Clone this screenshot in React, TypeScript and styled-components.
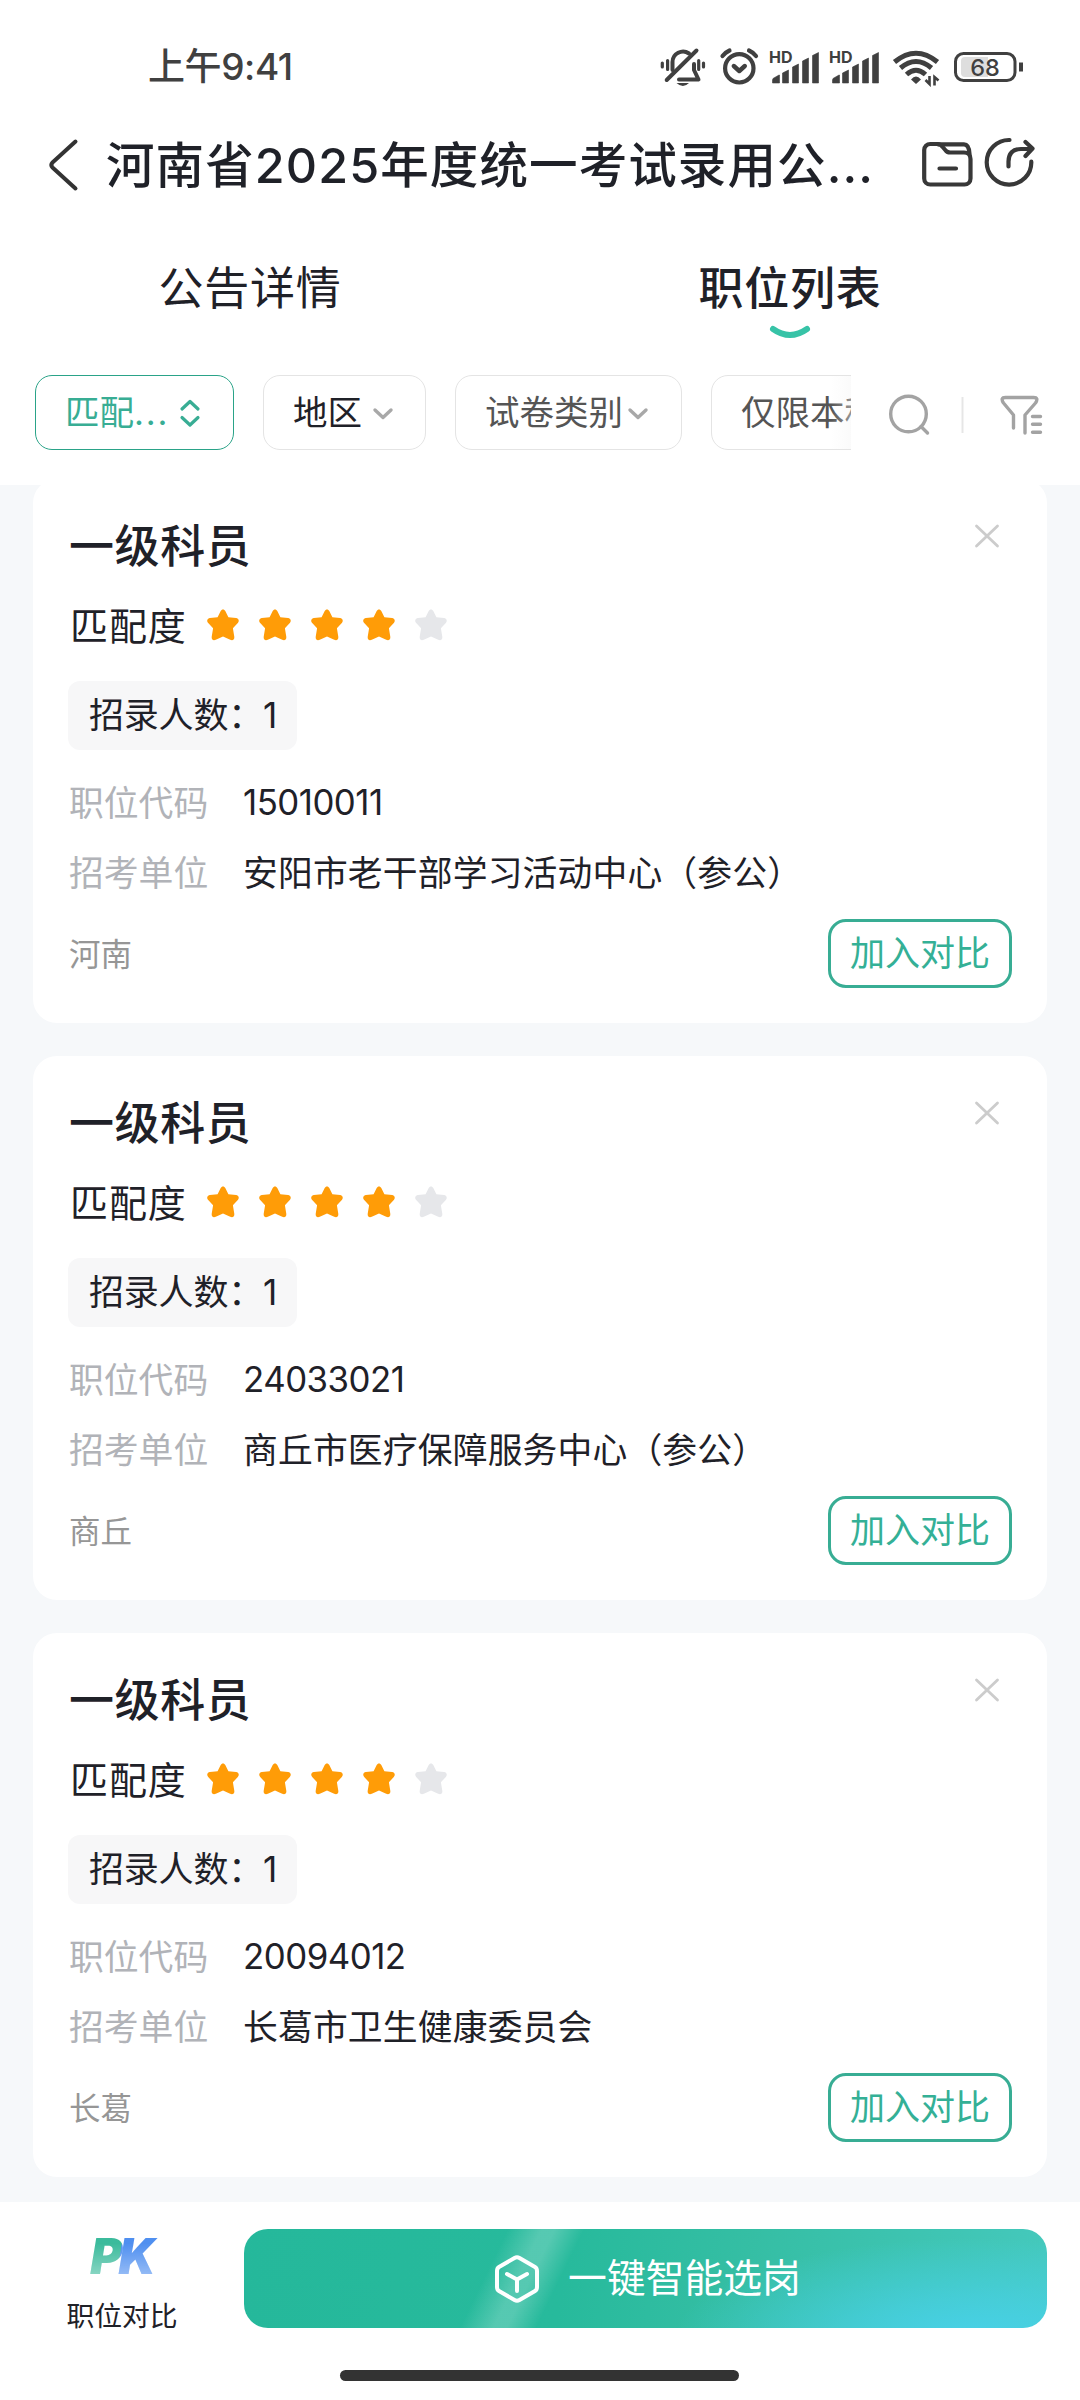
import React from "react";
import styled, { createGlobalStyle } from "styled-components";

const Global = createGlobalStyle`
  *, *::before, *::after { box-sizing: border-box; }
  body { margin: 0; background: #fff; }
  button { font: inherit; }
`;

const Screen = styled.div`
  width: 1080px;
  height: 2400px;
  display: flex;
  flex-direction: column;
  overflow: hidden;
  background: #fff;
  color: #1f2128;
  font-family: Inter, "Noto Sans CJK SC", sans-serif;
  white-space: nowrap;
`;

const StatusBar = styled.div`
  height: 116px;
  padding: 18px 57px 0 148px;
  display: flex;
  align-items: center;
  justify-content: space-between;
  flex: none;
`;

const Clock = styled.div`
  font-size: 37px;
  font-weight: 500;
  color: #404040;
  line-height: 50px;
  letter-spacing: -0.4px;
`;

const StatusIcons = styled.svg`
  width: 364px;
  height: 40px;
  flex: none;
`;

const NavBar = styled.header`
  height: 104px;
  flex: none;
  display: flex;
  align-items: center;
  padding: 0 44px 6px 47px;
`;

const BackIcon = styled.svg`
  width: 32px;
  height: 56px;
  margin-right: 27px;
`;

const Title = styled.h1`
  margin: 0;
  padding-top: 2px;
  flex: 1;
  font-size: 48.5px;
  font-weight: 500;
  line-height: 70px;
  letter-spacing: 1.1px;
`;

const NavIcons = styled.svg`
  width: 118px;
  height: 56px;
`;

const Tabs = styled.nav`
  height: 155px;
  flex: none;
  display: grid;
  grid-template-columns: 1fr 1fr;
`;

const Tab = styled.div<{ $active?: boolean }>`
  display: flex;
  flex-direction: column;
  align-items: center;
  padding: 35px 40px 0 0;
  font-size: 45px;
  line-height: 68px;
  letter-spacing: 0.8px;
  font-weight: ${(p) => (p.$active ? 500 : 400)};
`;

const Smile = styled.svg`
  width: 42px;
  height: 16px;
  margin-top: 2px;
`;

const FilterBar = styled.div`
  height: 110px;
  flex: none;
  display: flex;
  align-items: flex-start;
  padding-left: 35px;
`;

const ChipStrip = styled.div`
  position: relative;
  width: 816px;
  display: flex;
  gap: 29px;
  overflow: hidden;
`;

const StripFade = styled.div`
  position: absolute;
  right: 0;
  top: 1px;
  width: 20px;
  height: 73px;
  background: linear-gradient(to right, rgba(244, 244, 244, 0), rgba(244, 244, 244, 0.4));
`;

const Chip = styled.div<{ $w: number; $tone: string; $active?: boolean; $gap?: number }>`
  width: ${(p) => p.$w}px;
  height: 75px;
  flex: none;
  display: flex;
  align-items: center;
  gap: ${(p) => p.$gap ?? 10}px;
  padding-left: 29px;
  border: ${(p) => (p.$active ? "1px solid #2aa388" : "1px solid #e4e4e4")};
  border-radius: 17px;
  color: ${(p) => p.$tone};
  font-size: 34.5px;
  line-height: 50px;
`;

const Dots = styled.span`
  letter-spacing: 1.8px;
`;

const ChipIcon = styled.svg`
  width: 22px;
  height: 30px;
  flex: none;
`;

const ToolIcons = styled.svg`
  width: 229px;
  height: 75px;
`;

const List = styled.main`
  flex: 1;
  min-height: 0;
  overflow: hidden;
  padding: 0 33px;
  background: #f6f8fa;
`;

const Feed = styled.div`
  margin-top: -6px;
  display: flex;
  flex-direction: column;
  gap: 33px;
`;

const Card = styled.article`
  height: 544px;
  flex: none;
  display: flex;
  flex-direction: column;
  padding: 34px 35px 0 36px;
  border-radius: 24px;
  background: #fff;
`;

const CardHead = styled.div`
  display: flex;
  justify-content: space-between;
  height: 77px;
`;

const CardTitle = styled.h2`
  margin: 0;
  font-size: 45px;
  line-height: 67px;
  font-weight: 500;
  letter-spacing: 0.6px;
`;

const CloseIcon = styled.svg`
  width: 28px;
  height: 28px;
  margin: 9px 11px 0 0;
`;

const MatchRow = styled.div`
  height: 66px;
  display: flex;
  align-items: center;
  padding-left: 1px;
  font-size: 38px;
  letter-spacing: 0.9px;
`;

const Stars = styled.div`
  display: flex;
  gap: 18px;
  margin: 3px 0 0 19px;
`;

const StarIcon = styled.svg`
  width: 34px;
  height: 34px;
`;

const Tag = styled.div`
  align-self: flex-start;
  margin: 25px 0 16px -1px;
  width: 229px;
  height: 69px;
  padding: 0 0 6px 21px;
  display: flex;
  align-items: center;
  border-radius: 12px;
  background: #f7f7f8;
  font-size: 35px;
  letter-spacing: -0.2px;
`;

const Field = styled.div`
  height: 70px;
  display: flex;
  align-items: center;
  font-size: 34.8px;
`;

const FieldLabel = styled.span`
  width: 174px;
  color: #b1b3b8;
`;

const FieldValue = styled.span<{ $numeric?: boolean }>`
  padding-top: ${(p) => (p.$numeric ? 2 : 0)}px;
  letter-spacing: ${(p) => (p.$numeric ? -0.5 : 0.15)}px;
`;

const CardFoot = styled.div`
  height: 69px;
  margin-top: 13px;
  display: flex;
  align-items: center;
  justify-content: space-between;
`;

const Region = styled.span`
  padding-bottom: 4px;
  font-size: 31.5px;
  color: #969696;
`;

const CompareButton = styled.button`
  width: 184px;
  height: 69px;
  padding: 0 0 1px;
  border: 3px solid #38ad94;
  border-radius: 18px;
  background: #fff;
  color: #34b096;
  font-size: 35px;
  line-height: 50px;
`;

const BottomBar = styled.footer`
  height: 198px;
  flex: none;
  display: flex;
  flex-direction: column;
  align-items: center;
  padding-top: 27px;
`;

const Actions = styled.div`
  width: 100%;
  height: 106px;
  display: flex;
`;

const PkEntry = styled.div`
  width: 244px;
  display: flex;
  flex-direction: column;
  align-items: center;
`;

const PkMark = styled.div`
  padding: 0 6px 0 4px;
  font-size: 49px;
  line-height: 56px;
  font-weight: 900;
  font-style: italic;
  letter-spacing: -4px;
  background:
    linear-gradient(rgba(255, 255, 255, 0) 25%, rgba(255, 255, 255, 0.42) 85%),
    linear-gradient(99deg, #3bbb9c 46.5%, #4f8ff0 47.5%);
  background-clip: text;
  -webkit-background-clip: text;
  color: transparent;
`;

const PkLabel = styled.div`
  margin-top: 11px;
  font-size: 27.8px;
  line-height: 40px;
`;

const SmartPick = styled.button`
  width: 803px;
  height: 99px;
  padding: 0 0 0 4px;
  display: flex;
  align-items: center;
  justify-content: center;
  gap: 28px;
  border: 0;
  border-radius: 24px;
  color: #fff;
  font-size: 38.8px;
  background:
    linear-gradient(116deg, rgba(255, 255, 255, 0) 31%, rgba(255, 255, 255, 0.22) 35%, rgba(255, 255, 255, 0.22) 36.5%, rgba(255, 255, 255, 0) 40%),
    radial-gradient(ellipse 300px 100px at 91% 110%, #48d1e8 0%, rgba(72, 209, 232, 0.65) 40%, rgba(72, 209, 232, 0) 100%),
    linear-gradient(100deg, #25b89b 0%, #27ba9c 40%, #35bea4 62%, #45c9bd 100%);
`;

const SmartText = styled.span`
  padding-bottom: 7px;
`;

const CubeIcon = styled.svg`
  width: 46px;
  height: 50px;
`;

const HomeIndicator = styled.div`
  width: 399px;
  height: 11px;
  margin: 35px 1px 0 0;
  border-radius: 6px;
  background: #333;
`;

const STAR =
  "M17 1.5c1 0 1.8.6 2.3 1.6l3.1 6.2 7.7.8c2.7.4 3.5 3 1.7 4.9l-4.9 5.3 1.4 8.4c.4 2.8-1.6 4.2-4.100 3L17 28.600l-7.200 3.100c-2.500 1.200-4.500-.2-4.100-3l1.400-8.400L2.200 15C.4 13.100 1.200 10.500 3.900 10.100l7.700-.8 3.100-6.200c.5-1 1.300-1.600 2.300-1.600z";

const Star = ({ on }: { on: boolean }) => (
  <StarIcon viewBox="0 0 34 34">
    <path d={STAR} fill={on ? "#ff9c07" : "#e6e7ea"} />
  </StarIcon>
);

const Chevron = () => (
  <ChipIcon viewBox="0 0 22 30" fill="none" stroke="#a8a8a8" strokeWidth="3.4" strokeLinecap="round" strokeLinejoin="round">
    <path d="M3 12l8 7.500 8-7.500" />
  </ChipIcon>
);

const SignalBars = ({ x }: { x: number }) => (
  <g transform={`translate(${x} 0)`}>
    <text x="-1" y="16" fontFamily="Inter" fontSize="16" fontWeight="700" fill="#404040">HD</text>
    <path
      d="M3 31.500l6-3.500h.500v8H2.500v-3zM12.500 26l6-3v13h-6zM22.500 20l6-3v19h-6zM32.500 14l6-3v25h-6zM42.500 8.500l6-3V36h-6z"
      fill="#404040"
      stroke="#404040"
      strokeWidth="0.6"
      strokeLinejoin="round"
    />
  </g>
);

const jobs = [
  { title: "一级科员", stars: 4, count: 1, code: "15010011", unit: "安阳市老干部学习活动中心（参公）", region: "河南" },
  { title: "一级科员", stars: 4, count: 1, code: "24033021", unit: "商丘市医疗保障服务中心（参公）", region: "商丘" },
  { title: "一级科员", stars: 4, count: 1, code: "20094012", unit: "长葛市卫生健康委员会", region: "长葛" },
];

const JobCard = ({ job }: { job: (typeof jobs)[number] }) => (
  <Card>
    <CardHead>
      <CardTitle>{job.title}</CardTitle>
      <CloseIcon viewBox="0 0 28 28" stroke="#cccccc" strokeWidth="2.8" strokeLinecap="round">
        <path d="M3.500 4l21 20M24.500 4l-21 20" />
      </CloseIcon>
    </CardHead>
    <MatchRow>
      匹配度
      <Stars>
        {[0, 1, 2, 3, 4].map((i) => (
          <Star key={i} on={i < job.stars} />
        ))}
      </Stars>
    </MatchRow>
    <Tag>招录人数：{job.count}</Tag>
    <Field>
      <FieldLabel>职位代码</FieldLabel>
      <FieldValue $numeric>{job.code}</FieldValue>
    </Field>
    <Field>
      <FieldLabel>招考单位</FieldLabel>
      <FieldValue>{job.unit}</FieldValue>
    </Field>
    <CardFoot>
      <Region>{job.region}</Region>
      <CompareButton>加入对比</CompareButton>
    </CardFoot>
  </Card>
);

export default function App() {
  return (
    <Screen>
      <Global />
      <StatusBar>
        <Clock>上午9:41</Clock>
        <StatusIcons viewBox="0 0 364 40" fill="none" stroke="#404040">
          <g strokeWidth="4" strokeLinecap="round" strokeLinejoin="round">
            <path d="M13.500 23V15a10.500 10.500 0 0 1 16.500-8.500M35 17v6l4.500 9.500H20" />
            <path d="M7.700 33L37.500 3.500" />
            <path d="M3.300 16v4M8.600 13.500v9M39.700 13.500v9M44.500 16v4" strokeWidth="3.2" />
            <path d="M17.500 36h12.500q-6 6-12.500 0z" fill="#404040" strokeWidth="0" />
          </g>
          <circle cx="80.3" cy="21.3" r="14.2" strokeWidth="4.2" />
          <path d="M74.800 19l5.500 5 5.500-5" strokeWidth="4.4" strokeLinecap="round" strokeLinejoin="round" />
          <path d="M63.500 9q3-3.800 7-5.500M97 9q-3-3.800-7-5.500" strokeWidth="4.2" strokeLinecap="round" />
          <g stroke="none">
            <SignalBars x={111} />
            <SignalBars x={171} />
          </g>
          <g strokeWidth="5">
            <path d="M235.500 15Q257-2.500 278.500 15" />
            <path d="M241.500 21Q257 8 272.500 21" />
            <path d="M247.500 27.500Q257 19 266.500 27.500" />
            <path d="M252 32.500q5-6 10 0l-5 4.500z" fill="#404040" strokeWidth="0" />
            <path d="M266.500 33l4 4V29M279.500 33.500l-4-3.500v8.500" strokeWidth="2.6" />
          </g>
          <rect x="296.5" y="6.5" width="59.5" height="27" rx="8" strokeWidth="3" />
          <path d="M306 10h23v20h-23q-4 0-4-4V14q0-4 4-4z" fill="#dedede" stroke="none" />
          <path d="M362 15.500v9" strokeWidth="4" strokeLinecap="butt" />
          <text x="326" y="28.5" textAnchor="middle" fontFamily="Inter" fontSize="23.5" fontWeight="500" fill="#404040" stroke="none">68</text>
        </StatusIcons>
      </StatusBar>

      <NavBar>
        <BackIcon viewBox="0 0 32 56" fill="none" stroke="#333" strokeWidth="4" strokeLinecap="round" strokeLinejoin="round">
          <path d="M28.500 4.500L5.500 25.500q-2.500 2.500 0 5l23 21" />
        </BackIcon>
        <Title>河南省2025年度统一考试录用公...</Title>
        <NavIcons viewBox="0 0 118 56" fill="none" stroke="#383838" strokeWidth="4.2" strokeLinecap="round" strokeLinejoin="round">
          <path d="M6.200 13a6 6 0 0 1 6-6h7.500q3 0 5 3l3 3.500q1.500 2 4.500 2H46q6.500 0 6.500 6.500v19.500a6 6 0 0 1-6 6h-34.300a6 6 0 0 1-6-6z" />
          <path d="M20 7.300h26q5 0 5.500 9.500M21.500 31.500h16.500" />
          <path d="M91.500 3a22.300 22.300 0 1 0 21.800 21.700" />
          <path d="M90.500 29.500v-5q0-12.500 12.500-12.500h10M107.500 5l7 6.500-7 7.500" />
        </NavIcons>
      </NavBar>

      <Tabs>
        <Tab>公告详情</Tab>
        <Tab $active>
          职位列表
          <Smile viewBox="0 0 42 16" fill="none" stroke="#37c3a7" strokeWidth="6" strokeLinecap="round">
            <path d="M4 4q17 12 34 0" />
          </Smile>
        </Tab>
      </Tabs>

      <FilterBar>
        <ChipStrip>
          <Chip $w={199} $tone="#38ad94" $active>
            <span>匹配<Dots>...</Dots></span>
            <ChipIcon viewBox="0 0 22 30" fill="none" stroke="#38ad94" strokeWidth="3.2" strokeLinecap="round" strokeLinejoin="round">
              <path d="M3 11l8-7.500 8 7.500M3 19.500l8 7.500 8-7.500" />
            </ChipIcon>
          </Chip>
          <Chip $w={163} $tone="#1f2128">地区<Chevron /></Chip>
          <Chip $w={227} $tone="#555555" $gap={4}>试卷类别<Chevron /></Chip>
          <Chip $w={227} $tone="#555555" $gap={4}>仅限本科<Chevron /></Chip>
          <StripFade />
        </ChipStrip>
        <ToolIcons viewBox="0 0 229 75" fill="none" stroke="#a3a3a3" strokeWidth="3.4" strokeLinecap="round" strokeLinejoin="round">
          <circle cx="57.5" cy="39" r="17.8" />
          <path d="M70 51.500l6.500 6.500" />
          <path d="M111.500 22v36" stroke="#e6e6e6" strokeWidth="2" strokeLinecap="butt" />
          <path d="M162.500 53V40L152.500 28q-3.500-5.500 2-5.500h28q5.500 0 2 5.500L174 40v18" />
          <path d="M181.500 41.500h8M181.500 49.300h8M181.500 57.300h8" />
        </ToolIcons>
      </FilterBar>

      <List>
        <Feed>
          {jobs.map((job) => (
            <JobCard key={job.code} job={job} />
          ))}
        </Feed>
      </List>

      <BottomBar>
        <Actions>
          <PkEntry>
            <PkMark>PK</PkMark>
            <PkLabel>职位对比</PkLabel>
          </PkEntry>
          <SmartPick>
            <CubeIcon viewBox="0 0 46 50" fill="none" stroke="#fff" strokeWidth="4" strokeLinecap="round" strokeLinejoin="round">
              <path d="M20.500 4q2.500-1.500 5 0L41 13q2 1.200 2 4v16q0 2.800-2 4l-15.500 9q-2.500 1.500-5 0L5 37q-2-1.200-2-4V17q0-2.800 2-4z" />
              <path d="M13 20l10 5.500L33 20M23 25.500V37" />
            </CubeIcon>
            <SmartText>一键智能选岗</SmartText>
          </SmartPick>
        </Actions>
        <HomeIndicator />
      </BottomBar>
    </Screen>
  );
}
